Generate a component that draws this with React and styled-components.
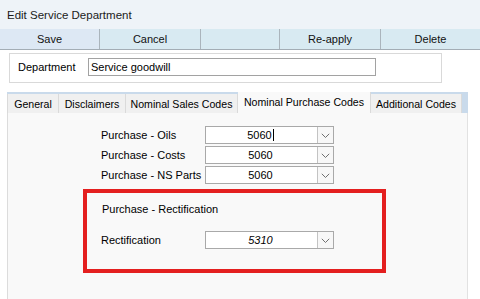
import React from 'react';
import styled, { createGlobalStyle } from 'styled-components';

const Global = createGlobalStyle`
  html, body { margin: 0; padding: 0; background: #fff; }
  body {
    font-family: "Liberation Sans", Arial, sans-serif;
    font-size: 11px;
    color: #000;
  }
  #root { width: 480px; height: 299px; overflow: hidden; }
  * { box-sizing: border-box; }
`;

const Window = styled.div`
  width: 480px;
  height: 299px;
  display: flex;
  flex-direction: column;
  background: #fff;
  overflow: hidden;
`;

const TitleBar = styled.div`
  flex: none;
  height: 29px;
  display: flex;
  align-items: center;
  padding-left: 7px;
  background: #eef3f8;
  font-size: 11.5px;
  color: #1b1b1b;
`;

const Toolbar = styled.div`
  flex: none;
  display: grid;
  grid-template-columns: 100px 101px 79px 101px 1fr;
  height: 21px;
  border-bottom: 1px solid #a3adb5;
`;

const ToolButton = styled.div`
  display: flex;
  align-items: center;
  justify-content: center;
  background: ${p => (p.$first ? '#dde8f4' : '#d8eaf2')};
  border-right: 1px solid #aab4bc;
  color: #111;
  &:last-child { border-right: none; }
`;

const Content = styled.div`
  flex: 1;
  min-height: 0;
  display: flex;
  flex-direction: column;
  padding: 3px 12px 0 7px;
`;

const DeptBox = styled.div`
  flex: none;
  margin-left: 2px;
  width: 433px;
  height: 30px;
  border: 1px solid #d9d9d9;
  display: flex;
  align-items: center;
  padding: 0 0 3px 8px;
`;

const DeptLabel = styled.span`
  width: 70px;
  flex: none;
`;

const TextBox = styled.div`
  width: 288px;
  height: 18px;
  border: 1px solid #a2a2a2;
  background: #fff;
  display: flex;
  align-items: center;
  padding-left: 2px;
`;

const Tabs = styled.div`
  flex: 1;
  min-height: 0;
  margin-top: 9px;
  width: 461px;
  display: flex;
  flex-direction: column;
`;

const TabStrip = styled.div`
  flex: none;
  height: 21px;
  display: flex;
  align-items: flex-end;
  background: #c9daeb;
`;

const Tab = styled.div`
  width: ${p => p.$w}px;
  height: ${p => (p.$active ? 21 : 19)}px;
  display: flex;
  align-items: center;
  justify-content: center;
  white-space: nowrap;
  font-size: 10.6px;
  padding-bottom: ${p => (p.$active ? 2 : 0)}px;
  background: ${p => (p.$active ? '#f9f9f9' : '#f0f0f0')};
  border-right: 1px solid #dadada;
  &:first-child { border-left: 1px solid #dadada; }
`;

const Panel = styled.div`
  flex: 1;
  background: #f9f9f9;
  border-left: 1px solid #dcdcdc;
  border-right: 1px solid #e2e2e2;
  padding-top: 13px;
`;

const FieldList = styled.div`
  display: flex;
  flex-direction: column;
  gap: 2px;
  padding-left: 93px;
`;

const Row = styled.div`
  display: flex;
  align-items: center;
  height: 18px;
`;

const RowLabel = styled.span`
  width: 104px;
  flex: none;
`;

const Combo = styled.div`
  width: 129px;
  height: 18px;
  border: 1px solid #a9a9a9;
  background: #fff;
  display: flex;
`;

const ComboText = styled.div`
  flex: 1;
  display: flex;
  align-items: center;
  justify-content: center;
  font-style: ${p => (p.$italic ? 'italic' : 'normal')};
  padding-right: 2px;
`;

const Caret = styled.span`
  display: inline-block;
  width: 1px;
  height: 12px;
  background: #000;
  margin-left: 1px;
`;

const DropButton = styled.div`
  width: 16px;
  flex: none;
  border-left: 1px solid #c3c3c3;
  background: #f7f7f7;
  display: flex;
  align-items: center;
  justify-content: center;
  padding-top: 2px;
`;

const Highlight = styled.div`
  margin: 5px 0 0 75px;
  width: 303px;
  height: 84px;
  border: 4px solid #e41f1f;
  padding: 10px 0 0 14px;
  display: flex;
  flex-direction: column;
`;

const GroupTitle = styled.div`
  height: 13px;
  line-height: 13px;
  margin-left: 1px;
  margin-bottom: 15px;
`;

const Chevron = () => (
  <svg width="9" height="6" viewBox="0 0 9 6">
    <polyline points="0.8,0.8 4.5,4.5 8.2,0.8" fill="none" stroke="#707070" strokeWidth="1" />
  </svg>
);

const ComboBox = ({ value, italic, caret }) => (
  <Combo>
    <ComboText $italic={italic}>
      {value}
      {caret && <Caret />}
    </ComboText>
    <DropButton>
      <Chevron />
    </DropButton>
  </Combo>
);

const tabs = [
  { label: 'General', w: 52 },
  { label: 'Disclaimers', w: 67 },
  { label: 'Nominal Sales Codes', w: 112 },
  { label: 'Nominal Purchase Codes', w: 133, active: true },
  { label: 'Additional Codes', w: 91 },
];

const fields = [
  { label: 'Purchase - Oils', value: '5060', caret: true },
  { label: 'Purchase - Costs', value: '5060' },
  { label: 'Purchase - NS Parts', value: '5060' },
];

export default function App() {
  return (
    <>
      <Global />
      <Window>
        <TitleBar>Edit Service Department</TitleBar>
        <Toolbar>
          <ToolButton $first>Save</ToolButton>
          <ToolButton>Cancel</ToolButton>
          <ToolButton />
          <ToolButton>Re-apply</ToolButton>
          <ToolButton>Delete</ToolButton>
        </Toolbar>
        <Content>
          <DeptBox>
            <DeptLabel>Department</DeptLabel>
            <TextBox>Service goodwill</TextBox>
          </DeptBox>
          <Tabs>
            <TabStrip>
              {tabs.map(t => (
                <Tab key={t.label} $w={t.w} $active={t.active}>
                  {t.label}
                </Tab>
              ))}
            </TabStrip>
            <Panel>
              <FieldList>
                {fields.map(f => (
                  <Row key={f.label}>
                    <RowLabel>{f.label}</RowLabel>
                    <ComboBox value={f.value} caret={f.caret} />
                  </Row>
                ))}
              </FieldList>
              <Highlight>
                <GroupTitle>Purchase - Rectification</GroupTitle>
                <Row>
                  <RowLabel>Rectification</RowLabel>
                  <ComboBox value="5310" italic />
                </Row>
              </Highlight>
            </Panel>
          </Tabs>
        </Content>
      </Window>
    </>
  );
}
